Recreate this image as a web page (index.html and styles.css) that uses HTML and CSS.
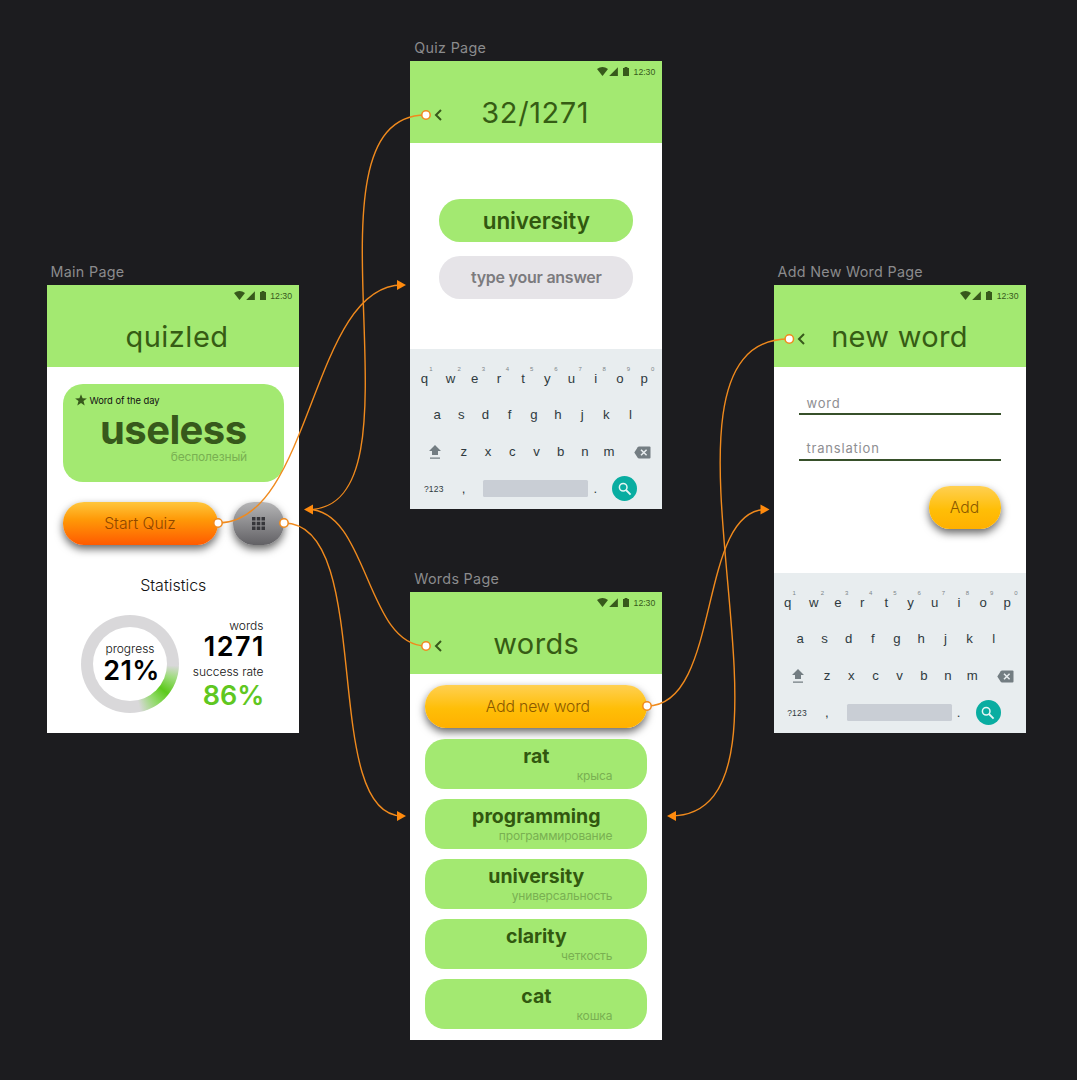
FILE: index.html
```
<!DOCTYPE html>
<html lang="en">
<head>
<meta charset="utf-8">
<title>Quizled prototype</title>
<link rel="stylesheet" href="styles.css">
</head>
<body>
<svg class="defs" width="0" height="0" aria-hidden="true">
  <symbol id="status" viewBox="0 0 34 12">
    <path d="M0 2.900Q5.500-1.100 11 2.900L5.500 9.900Z"/>
    <path d="M12.200 9.900H20.900V1.200Z"/>
    <path d="M26 1.900h1.600v-.9h2.800v.9h1.600V9.900H26Z"/>
  </symbol>
  <symbol id="shift" viewBox="0 0 12 15"><path d="M6 0 12 6H9V10H3V6H0ZM1 12.500h10v1.300H1Z"/></symbol>
  <symbol id="back" viewBox="0 0 17 13"><path d="M5 .5H15.500Q16.500.5 16.500 1.500V11.500Q16.500 12.500 15.500 12.500H5Q4.200 12.500 3.700 11.800L.3 6.500 3.700 1.200Q4.200.5 5 .5Z"/><path d="M7 3.700 12.600 9.300M12.600 3.700 7 9.300" stroke="#e8edef" stroke-width="1.500"/></symbol>
  <symbol id="chevron" viewBox="0 0 8 12"><path d="M7 1 2 6 7 11" fill="none" stroke="#37591b" stroke-width="2"/></symbol>
  <symbol id="search" viewBox="0 0 14 14"><circle cx="5.200" cy="5.200" r="3.800" fill="none" stroke="#e6f6f4" stroke-width="1.500"/><path d="M8 8 12.600 12.600" stroke="#e6f6f4" stroke-width="1.800"/></symbol>
</svg>
<main class="canvas">
  <section class="artboard main">
    <h2 class="label">Main Page</h2>
    <div class="screen">
      <header class="bar"><div class="status"><svg class="glyphs"><use href="#status"/></svg><span>12:30</span></div><h1 class="title t-quizled">quizled</h1></header>
      <div class="home">
        <div class="day">
          <div class="day-head"><svg class="star" viewBox="0 0 12 12"><path d="M6 .2 7.600 4.200 11.900 4.400 8.500 7.100 9.700 11.500 6 9 2.300 11.500 3.500 7.100.1 4.400 4.400 4.200Z"/></svg><span>Word of the day</span></div>
          <div class="day-word">useless</div>
          <div class="trans">бесполезный</div>
        </div>
        <div class="actions">
          <div class="btn fire"><span>Start Quiz</span></div>
          <div class="btn grey"><svg width="13" height="13" viewBox="0 0 13 13"><path d="M0 0h3.500v3.500H0ZM4.750 0h3.500v3.500h-3.500ZM9.500 0H13v3.500H9.500ZM0 4.750h3.500v3.500H0ZM4.750 4.750h3.500v3.500h-3.500ZM9.500 4.750H13v3.500H9.500ZM0 9.500h3.500V13H0ZM4.750 9.500h3.500V13h-3.500ZM9.500 9.500H13V13H9.500Z"/></svg></div>
        </div>
        <h3 class="stat-title">Statistics</h3>
        <div class="stats">
          <div class="ring"><div class="ring-in"><span class="small">progress</span><span class="num n21">21%</span></div></div>
          <div class="figures"><span class="small">words</span><span class="num n1271">1271</span><span class="small rate">success rate</span><span class="num n86">86%</span></div>
        </div>
      </div>
    </div>
  </section>

  <section class="artboard quiz">
    <h2 class="label">Quiz Page</h2>
    <div class="screen">
      <header class="bar"><div class="status"><svg class="glyphs"><use href="#status"/></svg><span>12:30</span></div><h1 class="title t-count">32/1271</h1><svg class="chev"><use href="#chevron"/></svg></header>
      <div class="ask"><div class="pill word">university</div><div class="pill answer">type your answer</div></div>
      <div class="kb">
        <div class="keys r1"><span>q<sup>1</sup></span><span>w<sup>2</sup></span><span>e<sup>3</sup></span><span>r<sup>4</sup></span><span>t<sup>5</sup></span><span>y<sup>6</sup></span><span>u<sup>7</sup></span><span>i<sup>8</sup></span><span>o<sup>9</sup></span><span>p<sup>0</sup></span></div>
        <div class="keys r2"><span>a</span><span>s</span><span>d</span><span>f</span><span>g</span><span>h</span><span>j</span><span>k</span><span>l</span></div>
        <div class="keys r3"><svg class="shift"><use href="#shift"/></svg><span>z</span><span>x</span><span>c</span><span>v</span><span>b</span><span>n</span><span>m</span><svg class="del"><use href="#back"/></svg></div>
        <div class="keys r4"><span class="sym">?123</span><span class="comma">,</span><span class="space"></span><span class="dot">.</span><span class="go"><svg width="14" height="14"><use href="#search"/></svg></span></div>
      </div>
    </div>
  </section>

  <section class="artboard words">
    <h2 class="label">Words Page</h2>
    <div class="screen">
      <header class="bar"><div class="status"><svg class="glyphs"><use href="#status"/></svg><span>12:30</span></div><h1 class="title t-words">words</h1><svg class="chev"><use href="#chevron"/></svg></header>
      <div class="list">
        <div class="btn gold wide"><span>Add new word</span></div>
        <div class="entry"><b>rat</b><span class="trans">крыса</span></div>
        <div class="entry"><b>programming</b><span class="trans">программирование</span></div>
        <div class="entry"><b>university</b><span class="trans">универсальность</span></div>
        <div class="entry"><b>clarity</b><span class="trans">четкость</span></div>
        <div class="entry"><b>cat</b><span class="trans">кошка</span></div>
      </div>
    </div>
  </section>

  <section class="artboard add">
    <h2 class="label">Add New Word Page</h2>
    <div class="screen">
      <header class="bar"><div class="status"><svg class="glyphs"><use href="#status"/></svg><span>12:30</span></div><h1 class="title t-new">new word</h1><svg class="chev"><use href="#chevron"/></svg></header>
      <div class="form"><div class="field">word</div><div class="field">translation</div><div class="btn gold short"><span>Add</span></div></div>
      <div class="kb">
        <div class="keys r1"><span>q<sup>1</sup></span><span>w<sup>2</sup></span><span>e<sup>3</sup></span><span>r<sup>4</sup></span><span>t<sup>5</sup></span><span>y<sup>6</sup></span><span>u<sup>7</sup></span><span>i<sup>8</sup></span><span>o<sup>9</sup></span><span>p<sup>0</sup></span></div>
        <div class="keys r2"><span>a</span><span>s</span><span>d</span><span>f</span><span>g</span><span>h</span><span>j</span><span>k</span><span>l</span></div>
        <div class="keys r3"><svg class="shift"><use href="#shift"/></svg><span>z</span><span>x</span><span>c</span><span>v</span><span>b</span><span>n</span><span>m</span><svg class="del"><use href="#back"/></svg></div>
        <div class="keys r4"><span class="sym">?123</span><span class="comma">,</span><span class="space"></span><span class="dot">.</span><span class="go"><svg width="14" height="14"><use href="#search"/></svg></span></div>
      </div>
    </div>
  </section>

  <svg class="links" width="1077" height="1080" viewBox="0 0 1077 1080">
    <g fill="none" stroke="#f08a1d" stroke-width="1.400">
      <path d="M426 115C290 115 435 509.500 308 509.500"/>
      <path d="M218 523C312 523 311 285 402 285"/>
      <path d="M284 523C376 523 319 816 402 816"/>
      <path d="M426 646C366 646 368 509.500 308 509.500"/>
      <path d="M647 706C722 706 697 509.500 766 509.500"/>
      <path d="M789 339C624 339 829 816 670 816"/>
    </g>
    <g fill="#ff8a0d">
      <path d="M304 509.500 313 504.500V514.500Z"/>
      <path d="M406 285 397 280V290Z"/>
      <path d="M406 816 397 811V821Z"/>
      <path d="M769.500 509.500 760.500 504.500V514.500Z"/>
      <path d="M667 816 676 811V821Z"/>
    </g>
    <g fill="#fff" stroke="#f08a1d" stroke-width="1.500">
      <circle cx="426" cy="115" r="4.200"/><circle cx="218" cy="523" r="4.200"/><circle cx="284" cy="523" r="4.200"/><circle cx="426" cy="646" r="4.200"/><circle cx="647" cy="706" r="4.200"/><circle cx="789.300" cy="339" r="4.200"/>
    </g>
  </svg>
</main>
</body>
</html>
```
FILE: styles.css
```
* { box-sizing: border-box; margin: 0; padding: 0; }
body { background: #1c1c1f; font-family: Inter, "Noto Sans", sans-serif; color: #111; }
h1, h2, h3 { font-weight: 400; }
.defs { position: absolute; }
.canvas { position: relative; width: 1077px; height: 1080px; overflow: hidden; }
.artboard { position: absolute; width: 252px; height: 472px; }
.main { left: 47px; top: 261px; }
.quiz { left: 410.300px; top: 37px; }
.words { left: 410.300px; top: 568px; }
.add { left: 773.500px; top: 261px; }
.label { height: 24px; line-height: 22px; padding-left: 4px; font-size: 14.300px; letter-spacing: .32px; color: #8b8b8d; white-space: nowrap; }
.main .label { padding-left: 3.500px; }
.screen { height: 448px; background: #fff; display: flex; flex-direction: column; }
.links { position: absolute; left: 0; top: 0; }

.bar { height: 82px; flex: none; background: #a3e971; color: #37591b; position: relative; }
.status { height: 20px; display: flex; align-items: center; justify-content: flex-end; gap: 2.500px; padding: 1px 7px 0 0; font: 8.700px/20px "Liberation Sans", sans-serif; }
.glyphs { width: 34px; height: 12px; fill: #37591b; }
.title { height: 62px; line-height: 63px; font-size: 29px; font-weight: 400; text-align: center; color: #365c14; white-space: nowrap; }
.t-quizled { padding-left: 8px; letter-spacing: .5px; }
.t-count { letter-spacing: .6px; padding-right: 2px; }
.t-words { letter-spacing: .4px; }
.t-new { letter-spacing: .3px; }
.chev { position: absolute; left: 23.500px; top: 48px; width: 8px; height: 12px; }

.home { padding: 17px 15px 0 15.500px; }
.day { height: 98px; border-radius: 20px; background: #a3e971; padding: 8px 12px 0; }
.day-head { display: flex; align-items: center; gap: 3px; height: 16px; font-size: 9.400px; letter-spacing: -.05px; }
.star { width: 12px; height: 12px; fill: #37591b; }
.day-word { height: 42px; line-height: 44px; font-size: 40px; font-weight: 700; letter-spacing: -.6px; text-align: center; color: #37591b; }
.trans { font-size: 12px; letter-spacing: -.16px; color: #79b052; text-align: right; }
.day .trans { line-height: 14px; padding-right: 25px; }
.actions { display: flex; justify-content: space-between; margin-top: 19.500px; }
.btn { height: 43px; border-radius: 21px; display: flex; align-items: center; justify-content: center; font-size: 15.700px; font-weight: 300; box-shadow: 0 4px 8px rgba(0,0,0,.6); }
.fire { width: 155px; background: linear-gradient(#ffc63c, #ff9a08 40%, #ff5a00); color: #8f4700; }
.grey { width: 51px; background: linear-gradient(#b5b5b6, #626165); fill: #36363a; }
.gold { background: linear-gradient(#ffd052, #ffbe07 55%, #ffb000); color: #8a5800; }
.wide span { letter-spacing: -.15px; padding-left: 3px; }
.stat-title { margin-top: 30px; height: 22px; line-height: 21px; font-size: 16px; font-weight: 300; text-align: center; }
.stats { display: flex; justify-content: space-between; padding: 18.500px 20.500px 0 18.500px; }
.ring { width: 98px; height: 98px; border-radius: 50%; padding: 12px; background: conic-gradient(#d9d8da 92deg, #9edc7c 108deg, #5cc91b 128deg, #8fda66 145deg, #d9d8da 168deg); }
.ring-in { height: 74px; border-radius: 50%; background: #fff; display: flex; flex-direction: column; align-items: center; padding-top: 14px; white-space: nowrap; }
.small { font-size: 12px; line-height: 15px; font-weight: 300; }
.num { font-size: 27px; line-height: 28px; font-weight: 600; color: #000; }
.n21 { letter-spacing: .3px; padding-left: 3px; line-height: 30px; }
.n1271 { letter-spacing: 1.500px; margin-right: -1.500px; }
.figures { display: flex; flex-direction: column; align-items: flex-end; padding-top: 3px; white-space: nowrap; }
.rate { margin-top: 3px; }
.n86 { color: #5fc721; line-height: 34px; margin-right: -1px; }

.ask { flex: 1; padding: 56px 29px 0; }
.pill { height: 43px; line-height: 43px; border-radius: 21px; text-align: center; font-weight: 600; }
.word { background: #a3e971; color: #31580f; font-size: 22.500px; letter-spacing: -.15px; }
.answer { margin-top: 14px; background: #e6e4e8; color: #7c7b7e; font-size: 16px; letter-spacing: -.25px; }

.kb { height: 160px; flex: none; background: #e8edef; color: #2f3a40; font: 13.200px/20px "Liberation Sans", sans-serif; padding-top: 20px; }
.keys { height: 36.500px; display: flex; }
.keys > span { width: 24.200px; text-align: center; position: relative; }
.r1 { height: 36px; padding-left: 4px; }
.r1 > span:first-child { text-align: left; padding-left: 6.500px; }
.r1 sup { position: absolute; left: 19px; top: -6px; font-size: 6px; line-height: 12px; color: #7d8589; }
.r1 > span:first-child sup { left: 15px; }
.r2 { height: 37px; padding-left: 14.700px; }
.r3 { padding-left: 18.500px; fill: #737d82; }
.shift { width: 12px; height: 15px; margin: 2.500px 11px 0 0; }
.del { width: 17px; height: 13px; margin: 3.500px 0 0 13px; }
.r4 { align-items: center; height: 36px; margin-top: -8px; padding-left: 13.500px; }
.r4 > .sym { width: 20px; font-size: 8.500px; letter-spacing: .2px; }
.r4 > .comma { width: 39.500px; }
.r4 > .space { width: 105px; height: 17px; background: #c9ced5; border-radius: 1.500px; }
.r4 > .dot { width: 14px; }
.r4 > .go { width: 25px; height: 25px; margin-left: 10px; border-radius: 50%; background: #09ada1; display: grid; place-items: center; }

.list { padding: 10.500px 15px 0; display: flex; flex-direction: column; gap: 10px; }
.wide { margin-bottom: 1.500px; }
.entry { height: 50px; border-radius: 20px; background: #a3e971; display: flex; flex-direction: column; padding: 7px 35px 0 0; }
.entry b { font-size: 19.500px; line-height: 21px; font-weight: 700; letter-spacing: 0; color: #31580f; text-align: center; margin-right: -35px; }
.entry .trans { line-height: 17px; }

.form { flex: 1; padding: 23px 25px 0; display: flex; flex-direction: column; }
.field { height: 25.200px; line-height: 27px; margin-bottom: 20.300px; border-bottom: 2px solid #37502a; padding-left: 8px; font-size: 13px; letter-spacing: .8px; font-weight: 400; color: #8e8e92; }
.short { width: 72px; align-self: flex-end; margin-top: 5px; }
```
